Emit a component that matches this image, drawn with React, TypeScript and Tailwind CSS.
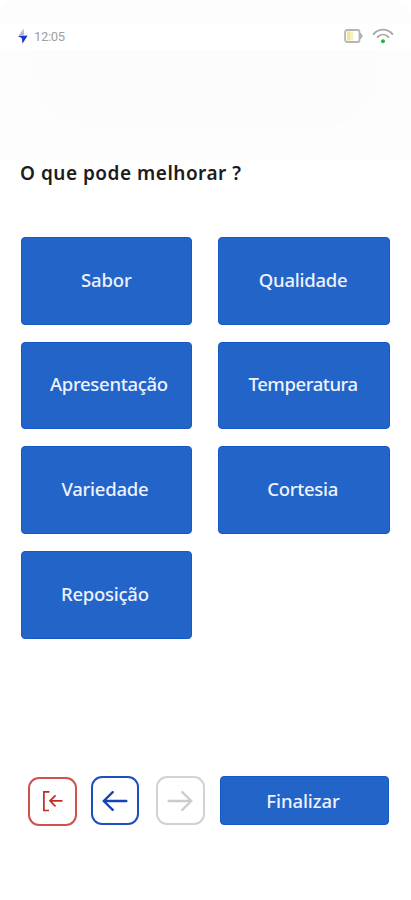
function BoltIcon() {
    return (
        <svg className="w-[10px] h-[16px]" viewBox="0 0 10 16">
            <path d="M5.5 0.5L0.3 8.2H4L3.3 8.8L4.3 15.5L9.7 7H6.2Z" fill="#b4b7d8" />
            <path d="M0.3 8H9.4L4.5 15.6L4 10.2L0.3 8.2Z" fill="#1e35c4" />
        </svg>
    )
}

function BatteryIcon() {
    return (
        <svg className="w-[19px] h-[16px]" viewBox="0 0 19 16" fill="none">
            <rect x="1.1" y="2" width="14.4" height="12" rx="2" stroke="#b5b5b5" strokeWidth="1.8" />
            <path d="M16.3 5L18.3 8L16.3 11Z" fill="#b0b0b0" stroke="#b0b0b0" strokeLinejoin="round" />
            <rect x="3" y="3.5" width="3.5" height="9" fill="#f1e68a" />
            <rect x="6.5" y="3.5" width="2.5" height="9" fill="#f6f0b8" />
        </svg>
    )
}

function WifiIcon() {
    return (
        <svg className="w-[22px] h-[16px]" viewBox="0 0 22 16" fill="none" strokeLinecap="round">
            <path d="M1.6 6C7 0.2 15 0.2 20.4 6" stroke="#a9a9a9" strokeWidth="1.9" />
            <path d="M5.6 9C8.8 5.8 13.2 5.8 16.4 9" stroke="#a9a9a9" strokeWidth="1.9" />
            <circle cx="11" cy="13.2" r="2" fill="#1fb83a" />
        </svg>
    )
}

const options = [
    { label: "Sabor", style: "tracking-[-0.15px] pb-[1px]" },
    { label: "Qualidade", style: "tracking-[-0.25px] pb-[1px] pr-[2px]" },
    { label: "Apresentação", style: "tracking-[-0.3px] pb-[3px] pl-[5px]" },
    { label: "Temperatura", style: "tracking-[-0.45px] pb-[3px] pr-[2px]" },
    { label: "Variedade", style: "tracking-[-0.25px] pb-[3px] pr-[3px]" },
    { label: "Cortesia", style: "tracking-[-0.3px] pb-[3px] pr-[3px]" },
    { label: "Reposição", style: "tracking-[-0.25px] pb-[3px] pr-[3px]" },
]

function App() {
    return (
        <main className="w-full h-[900px] bg-white flex flex-col font-['Noto_Sans',sans-serif] overflow-hidden">
            <div className="h-6 shrink-0 bg-[#fdfdfd] rounded-t-2xl"></div>
            <header className="h-[26px] shrink-0 flex items-center justify-between pb-[2px] pl-[18px] pr-[17px]">
                <div className="flex items-center gap-[6px]">
                    <BoltIcon />
                    <span className="font-['Roboto',sans-serif] text-[13px] leading-none tracking-[-0.3px] text-[#a0a0a0]">12:05</span>
                </div>
                <div className="flex items-center gap-[9px]">
                    <BatteryIcon />
                    <WifiIcon />
                </div>
            </header>
            <div className="h-[110px] shrink-0 bg-[#fdfdfd] px-8">
                <div className="h-[78px] bg-[#fcfcfc] rounded-b-[60px]"></div>
            </div>

            <h1 className="h-[77px] shrink-0 pl-5 text-[19px] leading-[26px] tracking-[0.5px] font-semibold text-[#1c1c1c]">O que pode melhorar ?</h1>

            <section className="grid grid-cols-2 gap-x-[26px] gap-y-[17px] pl-[20.5px] pr-[21px]">
                {options.map((option) => (
                    <button key={option.label} className={"h-[87.7px] rounded-[4px] bg-[#2264c8] border border-[#1559c5] text-[#eef2ff] text-[18.5px] font-medium " + option.style}>
                        {option.label}
                    </button>
                ))}
            </section>

            <footer className="mt-[137px] flex items-start pl-7">
                <button className="mt-[1px] w-[49px] h-[49px] rounded-[11px] border-2 border-[#d0524a] flex items-center justify-center">
                    <svg className="w-[22px] h-[22px]" viewBox="0 0 22 22" fill="none" stroke="#c02d22" strokeWidth="1.7">
                        <path d="M7.5 1.8H1.9V20.5H7" />
                        <path d="M20.5 10.8H8.2M13.5 5.3L8 10.8L13.5 16.3" />
                    </svg>
                </button>
                <button className="ml-[14px] w-[48px] h-[49px] rounded-[11px] border-2 border-[#1c4fc0] flex items-center justify-center">
                    <svg className="mt-[1px] w-[26px] h-[20px]" viewBox="0 0 26 20" fill="none" stroke="#1644b4" strokeWidth="2.4" strokeLinecap="round" strokeLinejoin="round">
                        <path d="M24.3 10H1.7M10.7 1.2L1.7 10L10.7 18.8" />
                    </svg>
                </button>
                <button className="ml-[17px] w-[49px] h-[49px] rounded-[11px] border-2 border-[#d2d2d2] flex items-center justify-center">
                    <svg className="mt-[1px] mr-[2px] w-[26px] h-[20px]" viewBox="0 0 26 20" fill="none" stroke="#cccccc" strokeWidth="2.4" strokeLinecap="round" strokeLinejoin="round">
                        <path d="M1.7 10H24.3M15.3 1.2L24.3 10L15.3 18.8" />
                    </svg>
                </button>
                <button className="ml-[15px] w-[169px] h-[49px] rounded-[4px] bg-[#2264c8] border border-[#1559c5] text-[#eef2ff] text-[18.5px] font-medium tracking-[-0.1px] pt-[1px] pr-[3px]">Finalizar</button>
            </footer>
        </main>
    )
}

export default App;
